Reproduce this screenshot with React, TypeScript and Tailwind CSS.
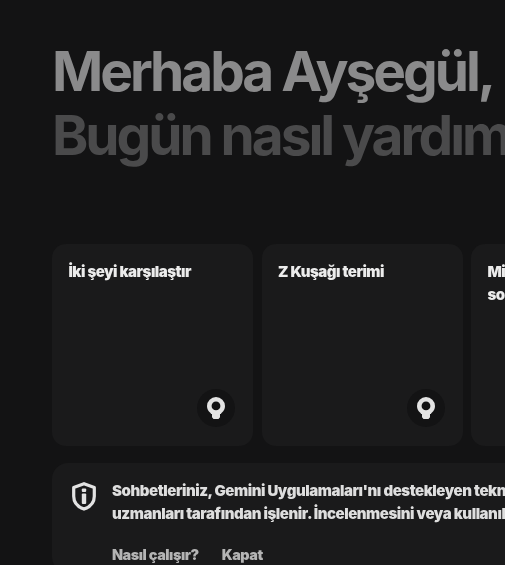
const font = { fontFamily: '"Inter", "Noto Sans", sans-serif' };

function Bulb() {
  return (
    <div className="flex h-[38px] w-[38px] items-center justify-center rounded-full bg-[#131314]">
      <svg width="18" height="22" viewBox="0 0 18 22" fill="none">
        <path
          fillRule="evenodd"
          clipRule="evenodd"
          fill="#e3e3e3"
          d="M9 0a9 9 0 0 1 9 9c0 3-1.200 4.800-3 6.400-.7.6-1 1.100-1 1.600h-1v3.200L11.500 22h-5L5 20.200V17H4c0-.5-.3-1-1-1.600C1.200 13.800 0 12 0 9a9 9 0 0 1 9-9Zm0 4.500a4.400 4.400 0 1 0 0 8.800 4.400 4.400 0 0 0 0-8.800Z"
        />
      </svg>
    </div>
  );
}

function Shield() {
  return (
    <svg width="24" height="29" viewBox="0 0 24 29" fill="none" className="mt-[3px] shrink-0">
      <path
        d="M12 1.700 22.300 5.400v8.800c0 6-4.200 10.700-10.300 12.900C5.900 24.900 1.700 20.200 1.700 14.200V5.400L12 1.700Z"
        stroke="#e3e3e3"
        strokeWidth="3.200"
        strokeLinejoin="round"
      />
      <rect x="9.800" y="6.500" width="4.400" height="3.600" rx="1" fill="#e3e3e3" />
      <rect x="9.800" y="11.500" width="4.400" height="10.500" rx="1" fill="#e3e3e3" />
    </svg>
  );
}

function Card({ lines, bulb = true }: { lines: string[]; bulb?: boolean }) {
  return (
    <div className="flex h-[202px] w-[201px] shrink-0 flex-col justify-between rounded-[14px] bg-[#1a1a1b] pt-[16px] pr-[18px] pb-[19px] pl-[16.500px]">
      <p className="text-[15px] leading-[23px] font-black tracking-[-0.5px] whitespace-nowrap text-[#ececec] blur-[0.5px]">
        {lines.map((l) => (
          <span key={l} className="block">
            {l}
          </span>
        ))}
      </p>
      {bulb && (
        <div className="flex justify-end">
          <Bulb />
        </div>
      )}
    </div>
  );
}

export default function App() {
  return (
    <div
      className="h-[565px] w-[505px] overflow-hidden bg-[#131314] pt-[39px] pl-[52px]"
      style={font}
    >
      <h1 className="text-[55px] leading-[64px] font-bold tracking-[-3.05px] whitespace-nowrap blur-[0.5px]">
        <span className="block text-[#8a8a8b]">Merhaba Ayşegül,</span>
        <span className="block text-[#4a4a4b]">Bugün nasıl yardımcı olabilirim?</span>
      </h1>

      <div className="mt-[77px] flex gap-[8.500px]">
        <Card lines={["İki şeyi karşılaştır"]} />
        <Card lines={["Z Kuşağı terimi"]} />
        <Card lines={["Mikro ders", "sorusu"]} bulb={false} />
      </div>

      <div className="mt-[17px] flex w-[700px] gap-[16px] rounded-[16px] bg-[#1a1a1b] pt-[16px] pl-[20px]">
        <Shield />
        <div className="text-[15px] font-black tracking-[-0.45px] whitespace-nowrap text-[#dedede] blur-[0.5px]">
          <p className="leading-[23px]">
            Sohbetleriniz, Gemini Uygulamaları'nı destekleyen teknolojilerin
            <br />
            uzmanları tarafından işlenir. İncelenmesini veya kullanılmasını
          </p>
          <div className="mt-[20px] flex gap-[23px] pb-[8px] text-[14.400px] leading-[20px] text-[#b4b4b4]">
            <span>Nasıl çalışır?</span>
            <span>Kapat</span>
          </div>
        </div>
      </div>
    </div>
  );
}
